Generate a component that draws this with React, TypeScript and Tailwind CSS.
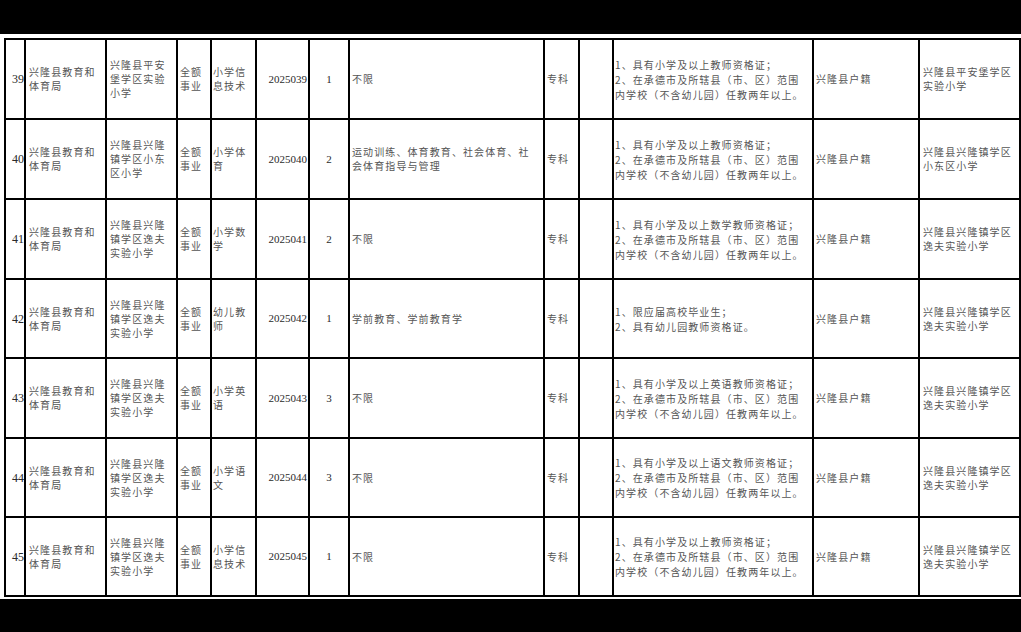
type Row = {
  no: string;
  dept: string[];
  unit: string[];
  post: string[];
  code: string;
  count: string;
  major: string[];
  edu: string;
  req: string[];
  huji: string;
  place: string[];
};

const REQ_A = ["1、具有小学及以上教师资格证；", "2、在承德市及所辖县（市、区）范围", "内学校（不含幼儿园）任教两年以上。"];
const req = (subj: string) => [
  `1、具有小学及以上${subj}教师资格证；`,
  "2、在承德市及所辖县（市、区）范围",
  "内学校（不含幼儿园）任教两年以上。",
];

const DEPT = ["兴隆县教育和", "体育局"];
const UNIT_YF = ["兴隆县兴隆", "镇学区逸夫", "实验小学"];
const PLACE_YF = ["兴隆县兴隆镇学区", "逸夫实验小学"];

const rows: Row[] = [
  { no: "39", dept: DEPT, unit: ["兴隆县平安", "堡学区实验", "小学"], post: ["小学信", "息技术"], code: "2025039", count: "1", major: ["不限"], edu: "专科", req: REQ_A, huji: "兴隆县户籍", place: ["兴隆县平安堡学区", "实验小学"] },
  { no: "40", dept: DEPT, unit: ["兴隆县兴隆", "镇学区小东", "区小学"], post: ["小学体", "育"], code: "2025040", count: "2", major: ["运动训练、体育教育、社会体育、社", "会体育指导与管理"], edu: "专科", req: REQ_A, huji: "兴隆县户籍", place: ["兴隆县兴隆镇学区", "小东区小学"] },
  { no: "41", dept: DEPT, unit: UNIT_YF, post: ["小学数", "学"], code: "2025041", count: "2", major: ["不限"], edu: "专科", req: req("数学"), huji: "兴隆县户籍", place: PLACE_YF },
  { no: "42", dept: DEPT, unit: UNIT_YF, post: ["幼儿教", "师"], code: "2025042", count: "1", major: ["学前教育、学前教育学"], edu: "专科", req: ["1、限应届高校毕业生；", "2、具有幼儿园教师资格证。"], huji: "兴隆县户籍", place: PLACE_YF },
  { no: "43", dept: DEPT, unit: UNIT_YF, post: ["小学英", "语"], code: "2025043", count: "3", major: ["不限"], edu: "专科", req: req("英语"), huji: "兴隆县户籍", place: PLACE_YF },
  { no: "44", dept: DEPT, unit: UNIT_YF, post: ["小学语", "文"], code: "2025044", count: "3", major: ["不限"], edu: "专科", req: req("语文"), huji: "兴隆县户籍", place: PLACE_YF },
  { no: "45", dept: DEPT, unit: UNIT_YF, post: ["小学信", "息技术"], code: "2025045", count: "1", major: ["不限"], edu: "专科", req: REQ_A, huji: "兴隆县户籍", place: PLACE_YF },
];

const cjk = "font-['Noto_Sans_CJK_SC',sans-serif] text-[10px] tracking-[1.1px] text-[#555555]";
const num = "font-['Liberation_Serif',serif] text-[11px] text-[#2a2a2a]";

const Lines = ({ lines, leading = "leading-[14px]" }: { lines: string[]; leading?: string }) => (
  <div className={`${cjk} ${leading}`}>
    {lines.map((l, i) => (
      <div key={i} className="whitespace-nowrap">
        {l}
      </div>
    ))}
  </div>
);

export default function App() {
  return (
    <div className="w-[1021px] h-[632px] bg-white flex flex-col overflow-hidden">
      <div className="h-[34px] bg-black shrink-0"></div>

      <div className="mt-[4px] ml-[4px] w-[1017px] grid bg-black gap-[2px] p-[2px] grid-cols-[18px_79px_69px_32px_43px_51px_38px_193px_33px_32px_198px_104px_99px] grid-rows-[78px_78px_78px_77px_78px_77px_77px]">
        {rows.map((r) => (
          <div key={r.no} className="contents">
            <div className={`bg-white flex items-center justify-end ${num} text-[12px]`}>{r.no}</div>
            <div className="bg-white flex items-center pl-[3px]">
              <Lines lines={r.dept} />
            </div>
            <div className="bg-white flex items-center pl-[3px]">
              <Lines lines={r.unit} />
            </div>
            <div className="bg-white flex items-center pl-[2px]">
              <Lines lines={["全额", "事业"]} />
            </div>
            <div className="bg-white flex items-center pl-[1px]">
              <Lines lines={r.post} />
            </div>
            <div className={`bg-white flex items-center justify-end pr-[1px] ${num}`}>{r.code}</div>
            <div className={`bg-white flex items-center justify-center ${num}`}>{r.count}</div>
            <div className="bg-white flex items-center pl-[2px]">
              <Lines lines={r.major} />
            </div>
            <div className="bg-white flex items-center pl-[2px]">
              <Lines lines={[r.edu]} />
            </div>
            <div className="bg-white"></div>
            <div className="bg-white flex items-center pl-[1px]">
              <Lines lines={r.req} leading="leading-[15px]" />
            </div>
            <div className="bg-white flex items-center pl-[2px]">
              <Lines lines={[r.huji]} />
            </div>
            <div className="bg-white flex items-center pl-[3px]">
              <Lines lines={r.place} />
            </div>
          </div>
        ))}
      </div>

      <div className="mt-[2px] flex-1 bg-black"></div>
    </div>
  );
}
